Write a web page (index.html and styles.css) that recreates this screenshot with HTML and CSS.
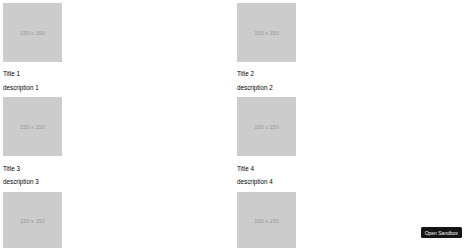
FILE: index.html
```html
<!DOCTYPE html>
<html>
<head>
<meta charset="utf-8">
<link rel="stylesheet" href="styles.css">
</head>
<body>
<div class="grid">
  <div class="card">
    <div class="ph">150 x 150</div>
    <p class="title">Title 1</p>
    <p class="desc">description 1</p>
  </div>
  <div class="card">
    <div class="ph">150 x 150</div>
    <p class="title">Title 2</p>
    <p class="desc">description 2</p>
  </div>
  <div class="card">
    <div class="ph">150 x 150</div>
    <p class="title">Title 3</p>
    <p class="desc">description 3</p>
  </div>
  <div class="card">
    <div class="ph">150 x 150</div>
    <p class="title">Title 4</p>
    <p class="desc">description 4</p>
  </div>
  <div class="card">
    <div class="ph">150 x 150</div>
    <p class="title">Title 5</p>
    <p class="desc">description 5</p>
  </div>
  <div class="card">
    <div class="ph">150 x 150</div>
    <p class="title">Title 6</p>
    <p class="desc">description 6</p>
  </div>
</div>
<button class="sandbox">Open Sandbox</button>
</body>
</html>
```
FILE: styles.css
```css
html, body {
  overflow: hidden;
}
body {
  margin: 3px;
  font-family: "Liberation Sans", Arial, sans-serif;
  font-size: 6.3px;
  color: #000;
  background: #fff;
}
.grid {
  display: grid;
  grid-template-columns: 1fr 1fr;
}
.card {
  display: flex;
  flex-direction: column;
  align-items: flex-start;
}
.ph {
  width: 59px;
  height: 59px;
  background: #cccccc;
  color: #969696;
  font-size: 5.6px;
  display: flex;
  align-items: center;
  justify-content: center;
}
.title, .desc {
  margin: 0;
  line-height: 7.2px;
}
.title {
  margin-top: 8.3px;
}
.desc {
  margin-top: 6.4px;
  margin-bottom: 6.4px;
}
.sandbox {
  position: fixed;
  right: 12px;
  bottom: 10px;
  background: #151515;
  color: #fff;
  border: none;
  border-radius: 1.5px;
  font-family: "Liberation Sans", Arial, sans-serif;
  font-size: 5px;
  line-height: 6px;
  padding: 2.3px 4px;
  margin: 0;
}
```
